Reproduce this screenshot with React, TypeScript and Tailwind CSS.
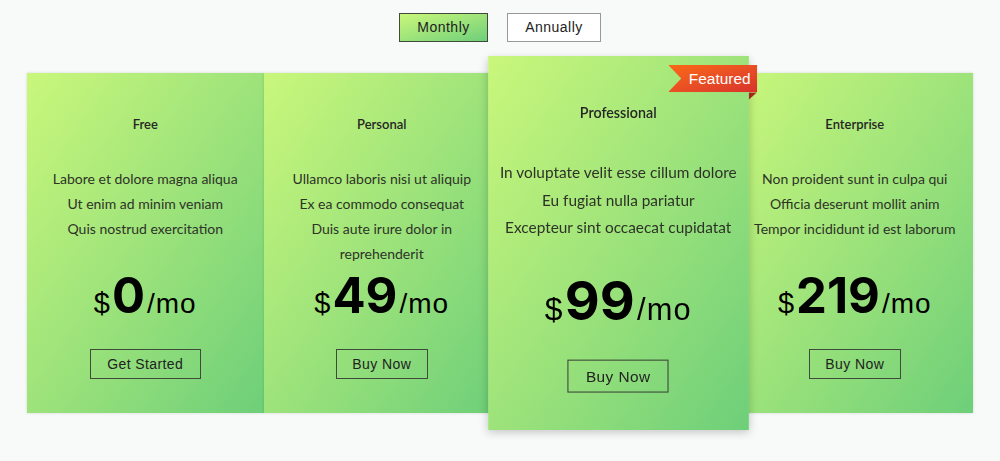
import React from "react";

const plans = [
  { name: "Free", lines: ["Labore et dolore magna aliqua", "Ut enim ad minim veniam", "Quis nostrud exercitation"], price: "0", cta: "Get Started" },
  { name: "Personal", lines: ["Ullamco laboris nisi ut aliquip", "Ex ea commodo consequat", "Duis aute irure dolor in", "reprehenderit"], price: "49", cta: "Buy Now" },
  { name: "Professional", lines: ["In voluptate velit esse cillum dolore", "Eu fugiat nulla pariatur", "Excepteur sint occaecat cupidatat"], price: "99", cta: "Buy Now", featured: true },
  { name: "Enterprise", lines: ["Non proident sunt in culpa qui", "Officia deserunt mollit anim", "Tempor incididunt id est laborum"], price: "219", cta: "Buy Now" },
];

const body = { fontFamily: "Lato, 'Open Sans', sans-serif" };
const sans = { fontFamily: "'Liberation Sans', Arial, sans-serif" };
const digits = { fontFamily: "Inter, 'Liberation Sans', sans-serif" };

function Card({ p }: { p: (typeof plans)[number] }) {
  return (
    <div
      className={
        "relative flex h-[340px] flex-col items-center bg-gradient-to-br from-[#c9f77b] to-[#6dcf79] text-[#262626] " +
        (p.featured
          ? "z-10 scale-110 shadow-[0_3px_8px_rgba(0,0,0,0.22)]"
          : "shadow-[0_0_3px_rgba(0,0,0,0.14)]")
      }
    >
      {p.featured && (
        <>
          <div
            className="absolute right-[-8px] top-[8px] flex h-[25px] w-[81px] items-center justify-end bg-gradient-to-br from-[#fa6a13] to-[#d8302c] pr-[6px] text-[14px] text-white [clip-path:polygon(0_0,100%_0,100%_100%,0_100%,12px_50%)]"
            style={sans}
          >
            Featured
          </div>
          <div className="absolute right-[-8px] top-[33px] h-[7px] w-[8px] bg-[#a3261c] [clip-path:polygon(0_0,100%_0,0_100%)]" />
        </>
      )}
      <div className="mt-[41px] h-[20px] text-[13px] font-semibold leading-[20px]" style={body}>
        {p.name}
      </div>
      <div className="mt-[32px] flex h-[100px] flex-col items-center text-[14px] leading-[25px] text-[#2e3328]" style={body}>
        {p.lines.map((l) => (
          <div key={l} className="whitespace-nowrap">{l}</div>
        ))}
      </div>
      <div className="mt-[5px] flex h-[50px] items-baseline leading-none text-black" style={sans}>
        <span className="mr-[2px] text-[29px]">$</span>
        <span className="text-[49px] font-bold" style={digits}>{p.price}</span>
        <span className="ml-[2px] text-[28px] tracking-[1px]">/mo</span>
      </div>
      <button
        className={
          "mt-[28px] flex h-[30px] items-center justify-center border border-[#3f4a3a] text-[14px] tracking-[0.4px] text-[#222] " +
          (p.cta === "Get Started" ? "w-[111px]" : "w-[92px]")
        }
        style={sans}
      >
        {p.cta}
      </button>
    </div>
  );
}

export default function App() {
  return (
    <div className="h-[461px] w-[1000px] overflow-hidden bg-[#f8faf9]">
      <div className="flex justify-center gap-[19px] pt-[13px]" style={sans}>
        <button className="flex h-[29px] w-[89px] items-center justify-center border border-[#3f4a3a] bg-gradient-to-br from-[#c9f77b] to-[#6dcf79] text-[14px] tracking-[0.5px] text-[#222]">
          Monthly
        </button>
        <button className="flex h-[29px] w-[94px] items-center justify-center border border-[#999] bg-white text-[14px] tracking-[0.5px] text-[#222]">
          Annually
        </button>
      </div>
      <div className="mx-auto mt-[31px] grid w-[946px] grid-cols-4">
        {plans.map((p) => (
          <Card key={p.name} p={p} />
        ))}
      </div>
    </div>
  );
}
